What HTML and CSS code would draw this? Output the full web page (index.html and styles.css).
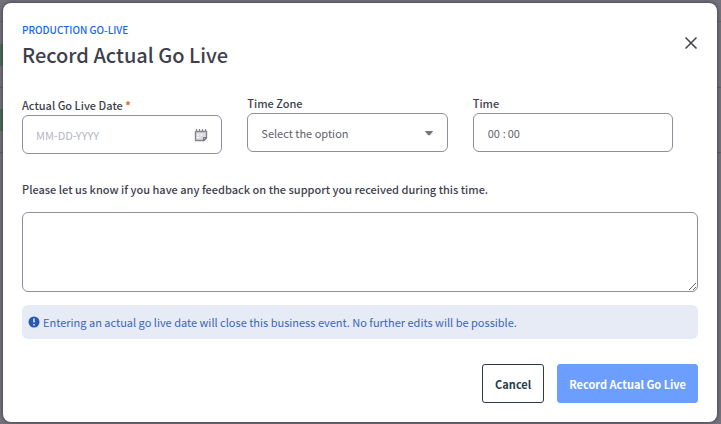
FILE: index.html
```
<!DOCTYPE html>
<html lang="en">
<head>
    <meta charset="UTF-8">
    <meta name="viewport" content="width=device-width, initial-scale=1.0">
    <title>Record Actual Go Live</title>
    <link rel="stylesheet" href="styles.css">
</head>
<body>
    <div class="modal" role="dialog" aria-labelledby="modal-title">
        <header class="modal-header">
            <div>
                <p class="eyebrow">PRODUCTION GO-LIVE</p>
                <h1 id="modal-title">Record Actual Go Live</h1>
            </div>
            <button type="button" class="close" aria-label="Close">
                <svg width="14" height="14" viewBox="0 0 14 14" fill="none" stroke="#3f3f4d" stroke-width="1.5">
                    <path d="M1.5 1.5l11 11M12.5 1.5l-11 11"/>
                </svg>
            </button>
        </header>

        <form id="go-live-form">
            <div class="fields">
                <div class="field field-date">
                    <label for="go-live-date">Actual Go Live Date <span class="required">*</span></label>
                    <div class="control">
                        <input type="text" id="go-live-date" placeholder="MM-DD-YYYY" required>
                        <svg width="14" height="14" viewBox="0 0 14 14">
                            <path d="M1.5 3.5h11V10L10 12.5H1.5z" fill="#dcdce2" stroke="#85858f" stroke-width="1.4" stroke-linejoin="round"/>
                            <path d="M2.5 1v3M5.5 1v3M8.5 1v3M11.5 1v3" stroke="#85858f" stroke-width="1.2"/>
                            <path d="M9.5 12.5v-3h3z" fill="#fff" stroke="#777785" stroke-width="1.2" stroke-linejoin="round"/>
                            <path d="M3 7h2M6.5 7h2M3 9.5h2" stroke="#fff"/>
                        </svg>
                    </div>
                </div>

                <div class="field">
                    <label for="time-zone">Time Zone</label>
                    <div class="control">
                        <select id="time-zone">
                            <option>Select the option</option>
                        </select>
                        <svg class="caret" width="10" height="6" viewBox="0 0 10 6">
                            <path d="M1.5 1.5h7L5.5 5h-1z" fill="#777" stroke="#777" stroke-linejoin="round"/>
                        </svg>
                    </div>
                </div>

                <div class="field">
                    <label for="hours">Time</label>
                    <div class="control time">
                        <input type="text" id="hours" value="00" maxlength="2">
                        <span>:</span>
                        <input type="text" id="minutes" value="00" maxlength="2" aria-label="Minutes">
                    </div>
                </div>
            </div>

            <label class="feedback-label" for="feedback">Please let us know if you have any feedback on the support you received during this time.</label>
            <textarea id="feedback"></textarea>

            <p class="notice">
                <svg width="12" height="12" viewBox="0 0 12 12">
                    <circle cx="6" cy="6" r="5.5" fill="#2859b0"/>
                    <path d="M6 2.5v4M6 8v1.5" stroke="#e6ebf6" stroke-width="1.5"/>
                </svg>
                Entering an actual go live date will close this business event. No further edits will be possible.
            </p>

            <div class="actions">
                <button type="button" class="btn btn-cancel">Cancel</button>
                <button type="submit" class="btn btn-primary">Record Actual Go Live</button>
            </div>
        </form>
    </div>
</body>
</html>
```

FILE: styles.css
```
* {
    box-sizing: border-box;
}

body {
    margin: 0;
    padding: 3px 4px 2px 3px;
    min-height: 100vh;
    display: flex;
    /* dimmed table rows and status badges behind the dialog */
    background:
        linear-gradient(#4d6b5b, #4d6b5b) 0 44px / 12px 22px no-repeat,
        linear-gradient(#4d6b5b, #4d6b5b) 0 109px / 12px 22px no-repeat,
        linear-gradient(#62616b, #62616b) 0 21px / 100% 1px no-repeat,
        linear-gradient(#62616b, #62616b) 0 87px / 100% 1px no-repeat,
        linear-gradient(#62616b, #62616b) 0 152px / 100% 1px no-repeat,
        #73727d;
    font-family: "Noto Sans CJK SC", "Noto Sans", sans-serif;
    font-size: 11px;
    line-height: 18px;
    color: #3f3f4d;
}

.modal {
    flex: 1;
    padding: 18px 19px;
    background: #fff;
    border-radius: 8px;
    box-shadow: 0 0 4px rgba(0, 0, 0, 0.5);
}

.modal-header {
    display: flex;
    justify-content: space-between;
    align-items: flex-start;
    margin-bottom: 24px;
}

.eyebrow {
    margin: 0;
    font-size: 10px;
    font-weight: 500;
    color: #1665f5;
}

h1 {
    margin: 0;
    font-size: 20px;
    line-height: 32px;
    font-weight: 500;
}

.close {
    display: flex;
    margin-top: 15px;
    padding: 0;
    border: none;
    background: none;
    cursor: pointer;
}

input,
select,
textarea,
button {
    font: inherit;
    color: inherit;
}

.fields {
    display: flex;
    gap: 25px;
    padding-right: 25px;
    min-height: 85px;
    align-items: flex-start;
}

.field {
    flex: 1;
    min-width: 0;
}

.field-date {
    padding-top: 2px;
}

.field label {
    display: block;
    padding-bottom: 1px;
    line-height: 17px;
    font-weight: 500;
}

.required {
    color: #d9660f;
    font-weight: 700;
}

.control {
    display: flex;
    align-items: center;
    height: 39px;
    padding: 0 13px;
    border: 1px solid #8f8e9c;
    border-radius: 6px;
    color: #5f5f6b;
}

.control input,
.control select {
    flex: 1;
    min-width: 0;
    padding: 0;
    border: none;
    outline: none;
    background: none;
    appearance: none;
}

.control input::placeholder {
    color: #b5b5be;
}

.control .caret {
    flex: none;
}

.time {
    padding: 0 14px;
    gap: 2px;
}

.control.time input {
    flex: none;
    width: 13px;
}

.feedback-label {
    display: block;
    margin-bottom: 14px;
    font-weight: 500;
}

textarea {
    display: block;
    width: 100%;
    height: 80px;
    padding: 8px 13px;
    border: 1px solid #8f8e9c;
    border-radius: 6px;
    outline: none;
    resize: vertical;
}

.notice {
    display: flex;
    align-items: center;
    gap: 3px;
    margin: 13px 0 25px;
    padding: 8px 6px;
    border-radius: 6px;
    background: #e6ebf6;
    color: #3b66b8;
}

.notice svg {
    flex: none;
}

.actions {
    display: flex;
    justify-content: flex-end;
    gap: 13px;
}

.btn {
    height: 39px;
    padding: 0 12px;
    border: 1px solid #2b3a4a;
    border-radius: 3px;
    background: #fff;
    color: #2b3a4a;
    font-weight: 700;
    cursor: pointer;
}

.btn-primary {
    padding: 0 11px;
    border-color: #6c9eff;
    background: #6c9eff;
    color: #fff;
}
```
